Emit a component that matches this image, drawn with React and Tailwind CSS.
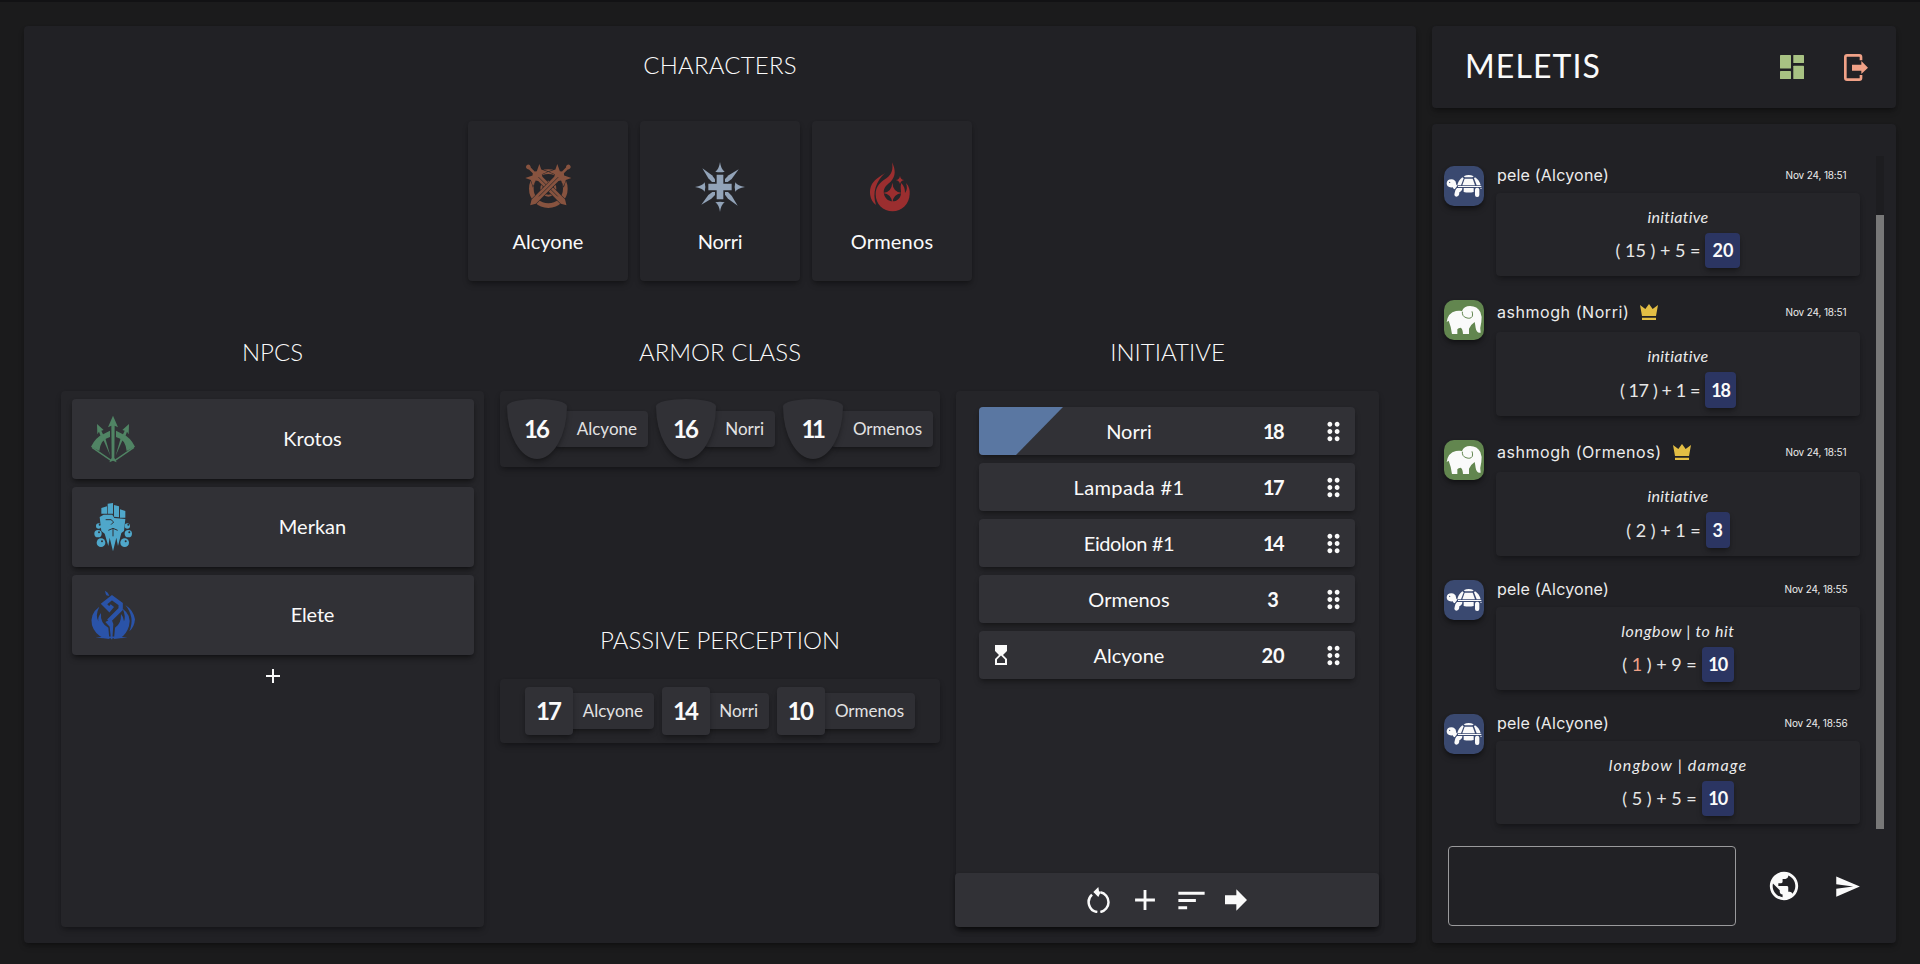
import React from "react";
import { MdAdd, MdDragIndicator, MdHourglassTop, MdPublic, MdSend, MdSort } from "react-icons/md";

/* ---------- emblems ---------- */

function Sword() {
  return (
    <g stroke="#252529" strokeWidth="3" paintOrder="stroke">
      <path d="M-4 -87 H4 V-62 L9 -58 L30 -68 L22 -52 L31 -34 L13 -41 L9 -34 V62 L0 77 L-9 62 V-34 L-13 -41 L-31 -34 L-22 -52 L-30 -68 L-9 -58 L-4 -62 Z" />
      <circle cy="-85" r="7" stroke="none" />
      <path d="M0 -42 V40" fill="none" strokeWidth="2" />
    </g>
  );
}

function SwordsEmblem() {
  return (
    <svg className="h-[50px] w-[50px]" viewBox="-76 -75 150 150" fill="#87533f">
      <circle cy="5" r="51" fill="none" stroke="#87533f" strokeWidth="14" />
      <circle cy="5" r="21" fill="none" stroke="#87533f" strokeWidth="6" />
      <g transform="rotate(-45)"><Sword /></g>
      <g transform="rotate(45)"><Sword /></g>
    </svg>
  );
}

function StarEmblem() {
  return (
    <svg className="h-[50px] w-[50px]" viewBox="-75 -75 150 150" fill="#92a3b8">
      <path d="M-10 -37 H10 V-10 H35 V10 H10 V37 H-10 V10 H-35 V-10 H-10 Z" />
      {[0, 90, 180, 270].map((a) => (
        <g key={a} transform={`rotate(${a})`}>
          <path d="M0 -75 Q3 -53 14 -46 Q0 -42 -14 -46 Q-3 -53 0 -75 Z" />
          <path d="M56 -53 L35 -24 L23 -15 H15 V-24 L26 -35 Z" />
        </g>
      ))}
    </svg>
  );
}

function FlameEmblem() {
  return (
    <svg className="h-[50px] w-[50px]" viewBox="1057 35 150 150" fill="#9b2e2f">
      <path d="M1132 36 C1143 58 1144 78 1128 94 C1112 106 1105 116 1108 131 C1111 145 1122 153 1134 153 C1147 153 1157 144 1159 130 C1160 119 1156 111 1160 98 C1169 108 1171 116 1171 128 C1178 120 1178 110 1174 98 C1184 108 1186 120 1185 132 C1184 161 1161 183 1134 183 C1105 183 1083 161 1083 132 C1083 108 1097 96 1115 84 C1132 72 1136 56 1132 36 Z" />
      <path d="M1111 68 C1084 94 1072 126 1084 164 C1065 150 1061 120 1072 101 C1082 85 1098 78 1111 68 Z" />
      <path d="M1133 97 Q1135 126 1162 128 Q1135 131 1133 158 Q1131 131 1105 128 Q1131 126 1133 97 Z" />
      <path d="M1156 76 Q1157 88 1169 89 Q1157 91 1156 102 Q1155 91 1143 89 Q1155 88 1156 76 Z" />
    </svg>
  );
}

function BowHalf() {
  return (
    <>
      <path d="M123 351 Q137 322 162 312 L180 303 V322 Q152 328 148 364 Z" />
      <path d="M141 283 L161 301 L154 303 L160 316 L152 320 L147 306 L142 314 Z" />
      <path d="M160 330 L166 326 L181 378 Z" />
      <path d="M126 353 L184 393" stroke="#508464" strokeWidth="4" />
    </>
  );
}

function BowEmblem() {
  return (
    <svg className="h-[50px] w-[50px]" viewBox="114 253 150 150" fill="#508464">
      <BowHalf />
      <g transform="translate(378 0) scale(-1 1)"><BowHalf /></g>
      <path d="M189 258 L204 293 L194 288 L193 384 L200 398 L189 393 L178 398 L185 384 L184 288 L174 293 Z" />
    </svg>
  );
}

function FistEmblem() {
  return (
    <svg className="h-[50px] w-[50px]" viewBox="113 515 150 150" fill="#4fa7ca">
      <path d="M153 533 L170 528 V550 H153 Z M172 520 L188 518 V550 H172 Z M191 524 L206 528 V561 L191 559 Z M209 537 L225 542 V562 H209 Z" />
      <path d="M148 560 L160 553 H186 L192 563 L225 566 L221 602 L213 608 L203 647 L198 622 L188 663 L178 622 L174 647 L163 610 L153 602 Z" />
      <path d="M166 568 H182 L190 575 L182 583 M174 600 L188 594 L202 600 M188 594 V618" fill="none" stroke="#313136" strokeWidth="3" />
      {[[143, 610, 11], [152, 637, 13], [145, 587, 8], [234, 610, 11], [223, 637, 13], [231, 587, 8]].map(([x, y, r]) => (
        <g key={`${x}-${y}`}>
          <circle cx={x} cy={y} r={r} />
          <circle cx={x + 3} cy={y - 4} r="3" fill="#313136" />
        </g>
      ))}
    </svg>
  );
}

function SerpentEmblem() {
  return (
    <svg className="h-[50px] w-[50px]" viewBox="114 780 150 150" fill="#2a53a8">
      <path d="M165 782 Q175 786 178 797 Q168 799 167 791 Z" />
      <path d="M187 827 L178 838 L162 822 L186 803 L212 822 V837 L176 873" fill="none" stroke="#2a53a8" strokeWidth="13" />
      <path d="M166 876 L184 866 L190 882 L187 928 H183 L179 890 Z" />
      <path d="M148 830 Q118 852 126 886 Q134 912 160 924 L178 927 L175 893 Q150 880 153 849 Q143 860 145 874 Q135 856 148 830 Z" />
      <path d="M218 836 Q246 856 237 888 Q229 914 211 924 L192 927 L195 893 Q214 882 213 852 Q222 862 222 874 Q228 858 218 836 Z" />
      <path d="M226 825 Q250 840 255 868 Q253 892 238 904 Q256 862 226 825 Z" />
      <path d="M136 923 Q185 916 233 923 Q185 927 136 923 Z" />
    </svg>
  );
}

/* ---------- avatars and small icons ---------- */

function TurtleAvatar() {
  return (
    <svg className="h-10 w-10 shrink-0 rounded-[10px] bg-[#3a4970] shadow-md shadow-black/40" viewBox="0 0 120 120" fill="#fafafa">
      <path d="M8 52 Q9 40 22 40 Q35 41 36 52 Q36 57 40 59 L32 70 Q27 69 26 64 Q8 66 8 52 Z" />
      <circle cx="17" cy="49" r="2" fill="#3a4970" />
      <path d="M59 31 Q74 23 89 31 L85 34 H63 Z" />
      <path d="M62 38 H86 L93 58 H55 Z" />
      <path d="M55 34 L59 37 L51 58 H40 Q43 43 55 34 Z" />
      <path d="M93 34 Q106 42 110 58 H98 L90 37 Z" />
      <rect x="42" y="60" width="70" height="3" />
      <path d="M59 66 H89 V78 Q74 81 59 78 Z" />
      <path d="M39 66 H55 Q55 75 46 79 Q46 92 37 92 Q29 91 32 81 Q33 71 39 66 Z" />
      <rect x="93" y="65" width="13" height="28" rx="6" />
      <circle cx="111" cy="67" r="2" />
    </svg>
  );
}

function ElephantAvatar() {
  return (
    <svg className="h-10 w-10 shrink-0 rounded-[10px] bg-[#62864f] shadow-md shadow-black/40" viewBox="0 0 120 120" fill="#fafafa">
      <path d="M8 66 Q12 38 36 33 Q46 31 54 33 Q60 18 78 18 Q100 18 109 36 Q115 50 112 66 Q107 84 110 98 Q98 101 95 84 Q94 76 92 66 Q79 75 75 86 V102 H57 Q56 86 50 83 Q43 83 40 88 V102 H24 Q22 82 14 62 Z" />
      <path d="M55 35 Q54 49 66 53 Q80 58 85 49 Q87 42 84 34" fill="none" stroke="#62864f" strokeWidth="3" />
    </svg>
  );
}

function Crown() {
  return (
    <svg className="ml-[11px] h-4 w-[18px]" viewBox="0 0 54 48" fill="#e3be44">
      <path d="M0 3 L16 15 L27 0 L38 15 L54 3 L48 36 H6 Z M6 41 H48 V48 H6 Z" />
    </svg>
  );
}

function RestartIcon() {
  return (
    <svg className="h-[26px] w-6" viewBox="439 109 72 78" fill="#fafafa">
      <path d="M479 125 A30 30 0 0 1 479 184 M470 184 A30 30 0 0 1 454 132" fill="none" stroke="#fafafa" strokeWidth="7.5" />
      <path d="M458 124 L473 109 L475 121 L480 125 L473 139 Z" />
    </svg>
  );
}

function ArrowIcon() {
  return (
    <svg className="h-[22px] w-[22px]" viewBox="0 0 66 66" fill="#fafafa">
      <path d="M0 19 H34 V1 L66 33 L34 65 V46 H0 Z" />
    </svg>
  );
}

function DashboardIcon() {
  return (
    <svg className="h-6 w-6" viewBox="0 0 24 24" fill="#a8c283">
      <rect width="11" height="13.5" rx=".6" />
      <rect y="16" width="11" height="8" rx=".6" />
      <rect x="13.3" width="10.7" height="8" rx=".6" />
      <rect x="13.3" y="10.7" width="10.7" height="13.3" rx=".6" />
    </svg>
  );
}

function LogoutIcon() {
  return (
    <svg className="h-[27px] w-6" viewBox="0 0 72 81" fill="#f0a187">
      <path d="M51 19 V9 Q51 4 46 4 H9 Q4 4 4 9 V72 Q4 77 9 77 H46 Q51 77 51 72 V63" fill="none" stroke="#f0a187" strokeWidth="8" />
      <path d="M24 32 H52 V21 L72 41 L52 60 V50 H24 Z" />
    </svg>
  );
}

/* ---------- building blocks ---------- */

function Heading({ children, className = "" }) {
  return <h2 className={`flex h-9 items-center justify-center text-[24px] font-light ${className}`}>{children}</h2>;
}

const characters = [
  { name: "Alcyone", Emblem: SwordsEmblem },
  { name: "Norri", Emblem: StarEmblem, tracking: "tracking-[-0.2px]" },
  { name: "Ormenos", Emblem: FlameEmblem, tracking: "tracking-[0.2px]" },
];

const npcs = [
  { name: "Krotos", Emblem: BowEmblem },
  { name: "Merkan", Emblem: FistEmblem },
  { name: "Elete", Emblem: SerpentEmblem, tracking: "tracking-[-0.2px]" },
];

const armor = [
  { value: 16, name: "Alcyone", width: "w-[141px]", tracking: "tracking-[-2px]" },
  { value: 16, name: "Norri", width: "w-[119px]", tracking: "tracking-[-2px]" },
  { value: 11, name: "Ormenos", width: "w-[150px]", tracking: "tracking-[-3.5px]" },
];

const perception = [
  { value: 17, name: "Alcyone", width: "w-[129px]", tracking: "tracking-[-2px]" },
  { value: 14, name: "Norri", width: "w-[107px]", tracking: "tracking-[-2px]" },
  { value: 10, name: "Ormenos", width: "w-[138px]", tracking: "tracking-[-1.5px]" },
];

const order = [
  { name: "Norri", value: 18, active: true, numTracking: "tracking-[-1.5px]" },
  { name: "Lampada #1", value: 17, tracking: "tracking-[0.35px]", numTracking: "tracking-[-1.5px]" },
  { name: "Eidolon #1", value: 14, tracking: "tracking-[-0.4px]", numTracking: "tracking-[-1.5px]" },
  { name: "Ormenos", value: 3 },
  { name: "Alcyone", value: 20, waiting: true },
];

const messages = [
  { user: "pele (Alcyone)", time: "Nov 24, 18:51", title: "initiative", titleTracking: "tracking-[0.3px]", die: "15", mod: "5", total: "20", pill: "w-[35px]", formula: "" },
  { user: "ashmogh (Norri)", gm: true, time: "Nov 24, 18:51", title: "initiative", titleTracking: "tracking-[0.3px]", die: "17", mod: "1", total: "18", pill: "w-[31px] tracking-[-1.2px]", formula: "tracking-[-0.4px]" },
  { user: "ashmogh (Ormenos)", gm: true, time: "Nov 24, 18:51", title: "initiative", titleTracking: "tracking-[0.3px]", die: "2", mod: "1", total: "3", pill: "w-6", formula: "" },
  { user: "pele (Alcyone)", time: "Nov 24, 18:55", title: "longbow | to hit", titleTracking: "tracking-[0.65px]", die: "1", fumble: true, mod: "9", total: "10", pill: "w-8 tracking-[-1px]", formula: "" },
  { user: "pele (Alcyone)", time: "Nov 24, 18:56", title: "longbow | damage", titleTracking: "tracking-[1.15px]", die: "5", mod: "5", total: "10", pill: "w-8 tracking-[-1px]", formula: "" },
];

function Stat({ item, shield }) {
  return (
    <div className={`flex items-center ${item.width}`}>
      <div
        className={`z-10 flex shrink-0 items-center justify-center bg-[#313136] pr-0.5 text-[24px] font-bold shadow-md shadow-black/30 ${
          shield ? "h-[60px] w-[60px] rounded-[50%_50%_50%_50%/12%_12%_88%_88%]" : "h-12 w-12 rounded"
        }`}
      >
        <span className={item.tracking}>{item.value}</span>
      </div>
      <div className="-ml-3 flex h-9 flex-1 items-center justify-end rounded bg-[#2f2f34] pr-[11px] text-[17px] text-[#e2e2e2] shadow-md shadow-black/30">
        {item.name}
      </div>
    </div>
  );
}

function InitiativeRow({ row }) {
  return (
    <div className="flex h-12 items-center overflow-hidden rounded bg-[#313136] shadow-md shadow-black/30">
      <div className="flex h-full w-[84px] items-center">
        {row.active && <div className="h-full w-full bg-[#5a77a2] [clip-path:polygon(0_0,100%_0,44%_100%,0_100%)]" />}
        {row.waiting && <MdHourglassTop className="ml-[10px]" size={24} />}
      </div>
      <div className={`w-[132px] pb-px text-center text-[20px] ${row.tracking || ""}`}>{row.name}</div>
      <div className={`ml-[45px] w-[66px] pb-px text-center text-[20px] font-bold ${row.numTracking || ""}`}>{row.value}</div>
      <MdDragIndicator className="ml-[13px]" size={29} />
    </div>
  );
}

function Message({ m }) {
  return (
    <div className="flex gap-3">
      {m.gm ? <ElephantAvatar /> : <TurtleAvatar />}
      <div className="w-[364px]">
        <div className={`mb-2 flex items-center font-['Inter',sans-serif] text-[16px] leading-none text-[#ececec] ${m.gm ? "h-6" : "h-[17px] mb-[10px]"}`}>
          <span className={m.gm ? "ml-px tracking-[0.55px]" : "ml-px tracking-[0.2px]"}>{m.user}</span>
          {m.gm && <Crown />}
          <span className="ml-auto w-[88px] text-center text-[10px] tracking-[-0.15px]">{m.time}</span>
        </div>
        <div className="flex flex-col items-center rounded bg-[#252529] pt-3 pb-2 shadow-md shadow-black/25">
          <div className={`h-6 text-[16px] leading-6 text-[#ececec] italic ${m.titleTracking}`}>{m.title}</div>
          <div className="mt-1 flex items-center gap-[5px]">
            <span className={`text-[18px] whitespace-pre text-[#e6e6e6] ${m.formula}`}>
              {"( "}
              <span className={m.fumble ? "text-[#f0a187]" : ""}>{m.die}</span>
              {` ) + ${m.mod} =`}
            </span>
            <span
              className={`flex items-center justify-center rounded bg-[#2b3562] text-[18px] font-bold shadow-md shadow-black/30 ${m.pill} ${
                m.gm ? "h-9" : "h-[35px]"
              }`}
            >
              {m.total}
            </span>
          </div>
        </div>
      </div>
    </div>
  );
}

/* ---------- page ---------- */

export default function App() {
  return (
    <div className="flex h-[964px] w-[1920px] gap-4 overflow-hidden border-t-2 border-[#121214] bg-[#1b1b1c] px-6 pt-6 pb-[21px] font-['Lato',sans-serif] text-[#fafafa]">
      <main className="flex w-[1392px] flex-col rounded bg-[#212125] shadow-md shadow-black/30">
        <Heading className="mt-[21px] tracking-[0.2px]">CHARACTERS</Heading>
        <section className="mt-[38px] flex justify-center gap-3">
          {characters.map(({ name, Emblem, tracking = "" }) => (
            <div key={name} className="flex h-40 w-40 flex-col items-center rounded bg-[#252529] pt-[41px] shadow-md shadow-black/30">
              <Emblem />
              <div className={`mt-[15px] text-[20px] leading-7 ${tracking}`}>{name}</div>
            </div>
          ))}
        </section>
        <div className="mt-[53px] flex flex-1 gap-4 pr-[37px] pb-4 pl-[37px]">
          <section className="flex w-[423px] flex-col">
            <Heading>NPCS</Heading>
            <div className="mt-[21px] flex h-[536px] flex-col gap-2 rounded bg-[#252529] px-[10.5px] pt-2 shadow-md shadow-black/25">
              {npcs.map(({ name, Emblem, tracking = "" }) => (
                <div key={name} className="flex h-20 items-center rounded bg-[#313136] pl-4 shadow-md shadow-black/40">
                  <Emblem />
                  <div className={`ml-[14px] w-[322px] pb-0.5 text-center text-[20px] ${tracking}`}>{name}</div>
                </div>
              ))}
              <MdAdd className="mt-[1px] self-center" size={24} />
            </div>
          </section>
          <section className="flex w-[440px] flex-col">
            <Heading>ARMOR CLASS</Heading>
            <div className="mt-[21px] flex h-[76px] items-center justify-center gap-2 rounded bg-[#252529] shadow-md shadow-black/25">
              {armor.map((a) => <Stat key={a.name} item={a} shield />)}
            </div>
            <Heading className="mt-[155px]">PASSIVE PERCEPTION</Heading>
            <div className="mt-[21px] flex h-16 items-center justify-center gap-2 rounded bg-[#252529] shadow-md shadow-black/25">
              {perception.map((p) => <Stat key={p.name} item={p} />)}
            </div>
          </section>
          <section className="flex w-[423px] flex-col">
            <Heading>INITIATIVE</Heading>
            <div className="mt-[21px] flex h-[536px] flex-col justify-between rounded bg-[#252529] shadow-md shadow-black/25">
              <div className="flex flex-col gap-2 pt-4 pr-6 pl-[23px]">
                {order.map((r) => <InitiativeRow key={r.name} row={r} />)}
              </div>
              <div className="-ml-px flex h-[54px] items-center justify-center rounded bg-[#313136] shadow-md shadow-black/40">
                <div className="flex w-[46px] justify-center"><RestartIcon /></div>
                <div className="flex w-[46px] justify-center"><MdAdd size={34} /></div>
                <div className="flex w-[46px] justify-center"><MdSort size={35} /></div>
                <div className="flex w-[44px] justify-center"><ArrowIcon /></div>
              </div>
            </div>
          </section>
        </div>
      </main>

      <aside className="flex w-[464px] flex-col gap-4">
        <header className="flex h-[82px] items-center rounded bg-[#212125] pr-7 pl-[33px] shadow-md shadow-black/30">
          <h1 className="pb-0.5 text-[32px] tracking-[1.1px]">MELETIS</h1>
          <div className="ml-auto flex items-center gap-10">
            <DashboardIcon />
            <LogoutIcon />
          </div>
        </header>
        <div className="flex flex-1 flex-col rounded bg-[#212125] shadow-md shadow-black/30">
          <div className="mt-8 flex h-[673px] justify-between pr-3 pl-3">
            <div className="flex flex-col gap-6 pt-[10px]">
              {messages.map((m, i) => <Message key={i} m={m} />)}
            </div>
            <div className="flex w-2 flex-col justify-end bg-[#1d1d20]">
              <div className="h-[614px] bg-[#787878]" />
            </div>
          </div>
          <div className="mt-[17px] flex items-center pl-4">
            <div className="h-20 w-72 rounded border border-[#9a9a9c]" />
            <MdPublic className="ml-[31px]" size={34} />
            <MdSend className="ml-[33px]" size={27} />
          </div>
        </div>
      </aside>
    </div>
  );
}
